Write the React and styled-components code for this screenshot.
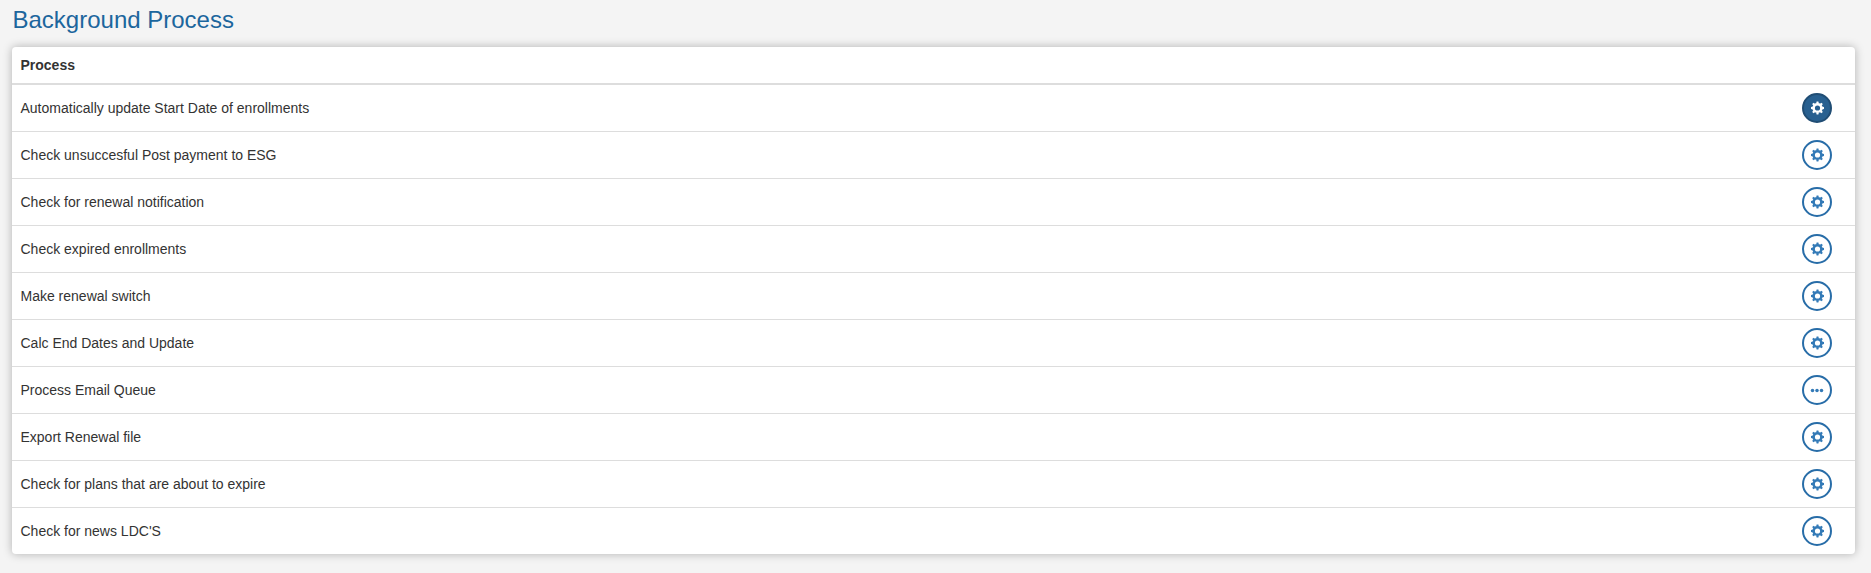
import React, { useState } from "react";
import styled, { createGlobalStyle } from "styled-components";

const GlobalStyle = createGlobalStyle`
  * {
    box-sizing: border-box;
  }
  body {
    margin: 0;
    background-color: #f4f4f4;
    color: #333;
    font-family: Arial, "Liberation Sans", sans-serif;
    font-size: 14px;
    line-height: 20px;
  }
`;

const Page = styled.main`
  min-height: 100vh;
  padding: 6px 16px 19px 12px;
`;

const Title = styled.h1`
  margin: 0 0 13px 0.5px;
  font-size: 24px;
  font-weight: normal;
  line-height: 28px;
  color: #1c669d;
`;

const Panel = styled.section`
  background-color: #fff;
  border-radius: 4px;
  box-shadow: 0 0 10px rgba(0, 0, 0, 0.28);
`;

const Header = styled.div`
  height: 38px;
  padding: 8px 8.5px;
  border-bottom: 2px solid #ddd;
  font-weight: bold;
`;

const Row = styled.div`
  display: flex;
  align-items: center;
  justify-content: space-between;
  height: 47px;
  padding: 0 23px 0 8.5px;
  border-top: 1px solid #ddd;
  &:first-child {
    height: 46px;
    border-top: none;
  }
`;

const RunButton = styled.button`
  display: flex;
  align-items: center;
  justify-content: center;
  width: 30px;
  height: 30px;
  padding: 0;
  border: 2px solid ${(props) => (props.$active ? "#204d74" : "#286da8")};
  border-radius: 50%;
  background-color: ${(props) => (props.$active ? "#286090" : "#fff")};
  color: ${(props) => (props.$active ? "#fff" : "#337ab7")};
  cursor: pointer;
`;

const Icon = styled.svg`
  display: block;
  width: 14px;
  height: 14px;
  fill: currentColor;
`;

const processes = [
  { name: "Automatically update Start Date of enrollments" },
  { name: "Check unsuccesful Post payment to ESG" },
  { name: "Check for renewal notification" },
  { name: "Check expired enrollments" },
  { name: "Make renewal switch" },
  { name: "Calc End Dates and Update" },
  { name: "Process Email Queue", more: true },
  { name: "Export Renewal file" },
  { name: "Check for plans that are about to expire" },
  { name: "Check for news LDC'S" },
];

const teeth = [0, 45, 90, 135, 180, 225, 270, 315];

function CogIcon() {
  return (
    <Icon viewBox="-0.5 0 14 14" aria-hidden="true">
      <path
        fillRule="evenodd"
        d="M7 1.9a5.1 5.1 0 1 0 0 10.2a5.1 5.1 0 1 0 0-10.2zM7 4.4a2.6 2.6 0 1 1 0 5.2a2.6 2.6 0 1 1 0-5.2z"
      />
      {teeth.map((angle) => (
        <path key={angle} d="M5.6 2.6L6.1 .5h1.8l.5 2.1z" transform={`rotate(${angle} 7 7)`} />
      ))}
    </Icon>
  );
}

function MoreIcon() {
  return (
    <Icon viewBox="0 0 14 14" aria-hidden="true">
      <circle cx="2.5" cy="7.5" r="1.75" />
      <circle cx="7" cy="7.5" r="1.75" />
      <circle cx="11.5" cy="7.5" r="1.75" />
    </Icon>
  );
}

export default function App() {
  const [active, setActive] = useState(0);

  return (
    <Page>
      <GlobalStyle />
      <Title>Background Process</Title>
      <Panel>
        <Header>Process</Header>
        <div>
          {processes.map((process, index) => (
            <Row key={process.name}>
              <span>{process.name}</span>
              <RunButton
                type="button"
                aria-label={`Run ${process.name}`}
                $active={active === index}
                onClick={() => setActive(index)}
              >
                {process.more ? <MoreIcon /> : <CogIcon />}
              </RunButton>
            </Row>
          ))}
        </div>
      </Panel>
    </Page>
  );
}
